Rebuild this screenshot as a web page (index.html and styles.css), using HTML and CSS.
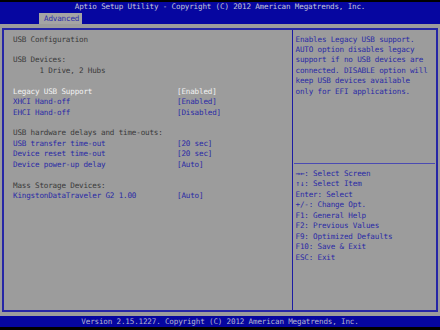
FILE: index.html
```html
<!DOCTYPE html>
<html lang="en">
<head>
    <meta charset="UTF-8">
    <title>Aptio Setup Utility</title>
    <link rel="stylesheet" href="styles.css">
</head>
<body>
    <div class="screen">
        <!-- Title bar with tabs -->
        <div class="topbar">
            <div class="title">Aptio Setup Utility - Copyright (C) 2012 American Megatrends, Inc.</div>
            <div class="tabs"><span class="tab">Advanced</span></div>
        </div>

        <!-- Setup page -->
        <div class="main">
            <div class="frame">
                <div class="left">
                    <div class="row text">USB Configuration</div>
                    <div class="row"></div>
                    <div class="row text">USB Devices:</div>
                    <div class="row text indent">1 Drive, 2 Hubs</div>
                    <div class="row"></div>
                    <div class="row item selected"><span class="label">Legacy USB Support</span><span>[Enabled]</span></div>
                    <div class="row item"><span class="label">XHCI Hand-off</span><span>[Enabled]</span></div>
                    <div class="row item"><span class="label">EHCI Hand-off</span><span>[Disabled]</span></div>
                    <div class="row"></div>
                    <div class="row text">USB hardware delays and time-outs:</div>
                    <div class="row item"><span class="label">USB transfer time-out</span><span>[20 sec]</span></div>
                    <div class="row item"><span class="label">Device reset time-out</span><span>[20 sec]</span></div>
                    <div class="row item"><span class="label">Device power-up delay</span><span>[Auto]</span></div>
                    <div class="row"></div>
                    <div class="row text">Mass Storage Devices:</div>
                    <div class="row item"><span class="label">KingstonDataTraveler G2 1.00</span><span>[Auto]</span></div>
                </div>

                <div class="right">
                    <div class="help">
                        <div class="row">Enables Legacy USB support.</div>
                        <div class="row">AUTO option disables legacy</div>
                        <div class="row">support if no USB devices are</div>
                        <div class="row">connected. DISABLE option will</div>
                        <div class="row">keep USB devices available</div>
                        <div class="row">only for EFI applications.</div>
                    </div>
                    <div class="keys">
                        <div class="row">&rarr;&larr;: Select Screen</div>
                        <div class="row">&uarr;&darr;: Select Item</div>
                        <div class="row">Enter: Select</div>
                        <div class="row">+/-: Change Opt.</div>
                        <div class="row">F1: General Help</div>
                        <div class="row">F2: Previous Values</div>
                        <div class="row">F9: Optimized Defaults</div>
                        <div class="row">F10: Save &amp; Exit</div>
                        <div class="row">ESC: Exit</div>
                    </div>
                </div>
            </div>
        </div>

        <div class="footer">Version 2.15.1227. Copyright (C) 2012 American Megatrends, Inc.</div>
    </div>
</body>
</html>
```

FILE: styles.css
```css
* {
    margin: 0;
    padding: 0;
    box-sizing: border-box;
}

body {
    background: #000;
    font-family: "DejaVu Sans Mono", "Liberation Mono", monospace;
    font-size: 7.6px;
    letter-spacing: -0.17px;
    width: 440px;
    height: 330px;
    overflow: hidden;
}

.screen {
    padding-top: 2px;
}

.topbar {
    height: 22px;
    background: #0606a0;
    color: #c4c4d8;
}

.title {
    height: 10.5px;
    line-height: 10.5px;
    text-align: center;
}

.tabs {
    padding: 0.5px 0 0 39px;
}

.tab {
    display: inline-block;
    height: 11px;
    line-height: 11px;
    padding: 0 3px 0 5px;
    background: #a4a4a4;
    color: #2c2ca8;
}

.main {
    height: 292px;
    background: #9c9c9c;
    padding: 4px 2px 4px 2px;
    display: flex;
}

.frame {
    flex: 1;
    display: flex;
    border: 2px solid #2626a6;
}

.left {
    width: 289px;
    border-right: 1px solid #1c1ca4;
    padding: 4.5px 0 0 9px;
}

.row {
    height: 10.45px;
    line-height: 10.45px;
    white-space: nowrap;
}

.text {
    color: #3a3a3a;
}

.indent {
    padding-left: 26.4px;
}

.item {
    display: flex;
    color: #2a2aa6;
}

.item .label {
    width: 164px;
}

.selected {
    color: #f2f2f2;
}

.right {
    flex: 1;
    display: flex;
    flex-direction: column;
    color: #2a2aa6;
}

.help {
    height: 134px;
    padding: 4.5px 0 0 1.5px;
    border-bottom: 1px solid #4a4ab2;
    margin: 0 1px;
}

.keys {
    padding: 5px 0 0 2.5px;
}

.footer {
    height: 11px;
    line-height: 11px;
    background: #0606a0;
    color: #b4b4d0;
    text-align: center;
}
```
